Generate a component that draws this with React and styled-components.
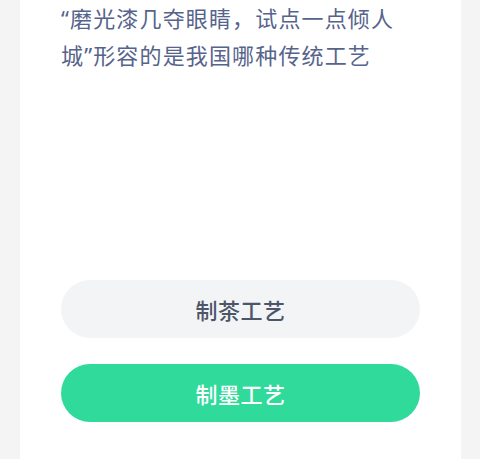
import React from 'react'
import styled, { createGlobalStyle } from 'styled-components'

const GlobalStyle = createGlobalStyle`
  html, body {
    margin: 0;
    padding: 0;
    background: #f4f4f4;
  }
  body {
    font-family: "Noto Sans", "Noto Sans CJK SC", sans-serif;
  }
`

const Page = styled.div`
  width: 480px;
  height: 459px;
  padding: 0 19px 0 20px;
  box-sizing: border-box;
  overflow: hidden;
`

const Card = styled.div`
  background: #ffffff;
  height: 100%;
  padding: 0 41px;
  display: flex;
  flex-direction: column;
`

const Question = styled.p`
  margin: 0;
  font-size: 22px;
  line-height: 37px;
  letter-spacing: 1.15px;
  color: #56648b;
`

const Options = styled.div`
  margin-top: 206px;
  display: flex;
  flex-direction: column;
  gap: 26px;
`

const Option = styled.button`
  height: 58px;
  border: none;
  border-radius: 29px;
  background: ${(p) => (p.$selected ? '#2fda9a' : '#f3f4f6')};
  color: ${(p) => (p.$selected ? '#ffffff' : '#4d5669')};
  font-family: inherit;
  font-size: 22px;
  font-weight: 500;
  letter-spacing: 0.5px;
  cursor: pointer;
`

const options = [
  { id: 1, text: '制茶工艺' },
  { id: 2, text: '制墨工艺', selected: true },
]

export default function App() {
  return (
    <Page>
      <GlobalStyle />
      <Card>
        <Question>“磨光漆几夺眼睛，试点一点倾人城”形容的是我国哪种传统工艺</Question>
        <Options>
          {options.map((o) => (
            <Option key={o.id} $selected={o.selected}>
              {o.text}
            </Option>
          ))}
        </Options>
      </Card>
    </Page>
  )
}
